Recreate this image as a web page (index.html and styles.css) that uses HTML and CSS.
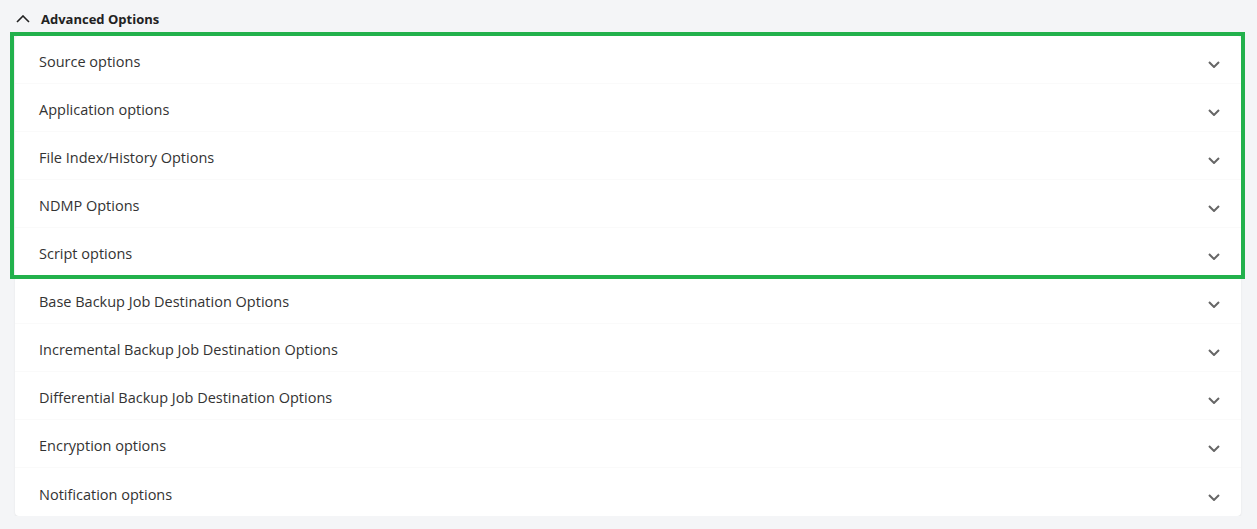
FILE: index.html
```html
<!DOCTYPE html>
<html lang="en">
<head>
    <meta charset="UTF-8">
    <meta name="viewport" content="width=device-width, initial-scale=1.0">
    <title>Advanced Options</title>
    <link rel="stylesheet" href="styles.css">
</head>
<body>
    <!-- Section header -->
    <div class="section-head">
        <svg class="chevron-up" width="14" height="8" viewBox="0 0 14 8">
            <path d="M1 7 L7 1 L13 7" fill="none" stroke="#222" stroke-width="1.6"/>
        </svg>
        <span>Advanced Options</span>
    </div>

    <!-- Options list -->
    <div class="card">
        <div class="highlight"></div>
        <ul class="options">
            <li>Source options<svg class="chev" width="12" height="7" viewBox="0 0 12 7"><path d="M1 1 L6 6 L11 1" fill="none" stroke="#666" stroke-width="2"/></svg></li>
            <li>Application options<svg class="chev" width="12" height="7" viewBox="0 0 12 7"><path d="M1 1 L6 6 L11 1" fill="none" stroke="#666" stroke-width="2"/></svg></li>
            <li>File Index/History Options<svg class="chev" width="12" height="7" viewBox="0 0 12 7"><path d="M1 1 L6 6 L11 1" fill="none" stroke="#666" stroke-width="2"/></svg></li>
            <li>NDMP Options<svg class="chev" width="12" height="7" viewBox="0 0 12 7"><path d="M1 1 L6 6 L11 1" fill="none" stroke="#666" stroke-width="2"/></svg></li>
            <li>Script options<svg class="chev" width="12" height="7" viewBox="0 0 12 7"><path d="M1 1 L6 6 L11 1" fill="none" stroke="#666" stroke-width="2"/></svg></li>
            <li>Base Backup Job Destination Options<svg class="chev" width="12" height="7" viewBox="0 0 12 7"><path d="M1 1 L6 6 L11 1" fill="none" stroke="#666" stroke-width="2"/></svg></li>
            <li>Incremental Backup Job Destination Options<svg class="chev" width="12" height="7" viewBox="0 0 12 7"><path d="M1 1 L6 6 L11 1" fill="none" stroke="#666" stroke-width="2"/></svg></li>
            <li>Differential Backup Job Destination Options<svg class="chev" width="12" height="7" viewBox="0 0 12 7"><path d="M1 1 L6 6 L11 1" fill="none" stroke="#666" stroke-width="2"/></svg></li>
            <li>Encryption options<svg class="chev" width="12" height="7" viewBox="0 0 12 7"><path d="M1 1 L6 6 L11 1" fill="none" stroke="#666" stroke-width="2"/></svg></li>
            <li>Notification options<svg class="chev" width="12" height="7" viewBox="0 0 12 7"><path d="M1 1 L6 6 L11 1" fill="none" stroke="#666" stroke-width="2"/></svg></li>
        </ul>
    </div>
</body>
</html>
```

FILE: styles.css
```css
body {
    font-family: 'Open Sans', 'Noto Sans', sans-serif;
    background-color: #f4f5f7;
    color: #333;
    margin: 0;
    padding: 0 16px 0 15px;
}
.section-head {
    display: flex;
    align-items: center;
    gap: 11px;
    height: 36px;
    padding-left: 1px;
    padding-top: 2px;
    box-sizing: border-box;
    font-size: 13px;
    font-weight: 700;
    color: #222;
}
.card {
    position: relative;
    background-color: #fff;
    border-radius: 4px;
    box-shadow: 0 1px 2px rgba(0, 0, 0, 0.08);
}
.highlight {
    position: absolute;
    top: -4px;
    left: -5px;
    right: -4px;
    height: 239px;
    border: 4px solid #22b14c;
    pointer-events: none;
}
ul.options {
    list-style: none;
    margin: 0;
    padding: 0;
}
ul.options li {
    display: flex;
    align-items: center;
    justify-content: space-between;
    height: 48px;
    padding: 4px 21px 0 24px;
    box-sizing: border-box;
    border-bottom: 1px solid #fafafa;
    font-size: 14.5px;
}
ul.options li:last-child {
    border-bottom: none;
}
.chev {
    margin-top: 6px;
}
```
